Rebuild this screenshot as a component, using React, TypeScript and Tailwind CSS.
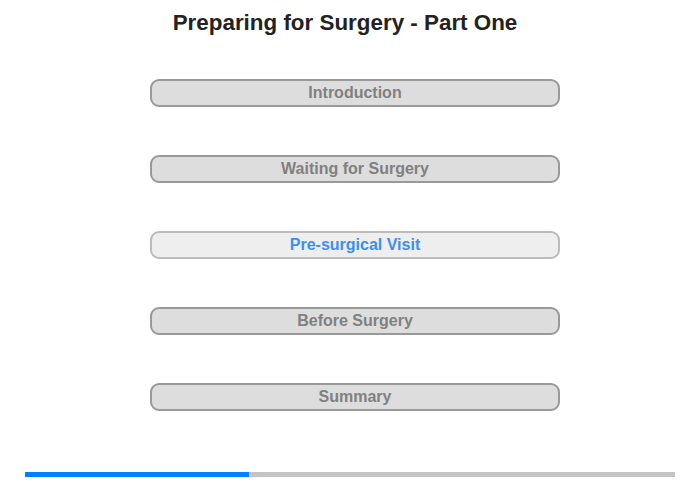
import React from "react";

const items = [
  { label: "Introduction", active: false },
  { label: "Waiting for Surgery", active: false },
  { label: "Pre-surgical Visit", active: true },
  { label: "Before Surgery", active: false },
  { label: "Summary", active: false },
];

export default function App() {
  return (
    <div
      className="w-[700px] h-[480px] bg-white flex flex-col"
      style={{ fontFamily: '"Liberation Sans", Arial, sans-serif' }}
    >
      <h1 className="mt-[11px] h-[24px] text-[22.4px] leading-[24px] font-bold text-[#222] text-center pr-[10px]">
        Preparing for Surgery - Part One
      </h1>
      <div className="mt-[44px] flex flex-col gap-[48px] pl-[150px]">
        {items.map((it) => (
          <div
            key={it.label}
            className={
              it.active
                ? "w-[410px] h-[28px] rounded-[9px] border-2 border-[#bbbbbb] bg-[#eeeeee] flex items-center justify-center text-[16px] font-bold text-[#3a8ff5]"
                : "w-[410px] h-[28px] rounded-[9px] border-2 border-[#999999] bg-[#dddddd] flex items-center justify-center text-[16px] font-bold text-[#808080]"
            }
          >
            {it.label}
          </div>
        ))}
      </div>
      <div className="mt-[61px] ml-[25px] w-[650px] h-[5px] bg-[#c4c4c4] flex">
        <div className="w-[224px] h-full bg-[#0080ff]" />
      </div>
    </div>
  );
}
